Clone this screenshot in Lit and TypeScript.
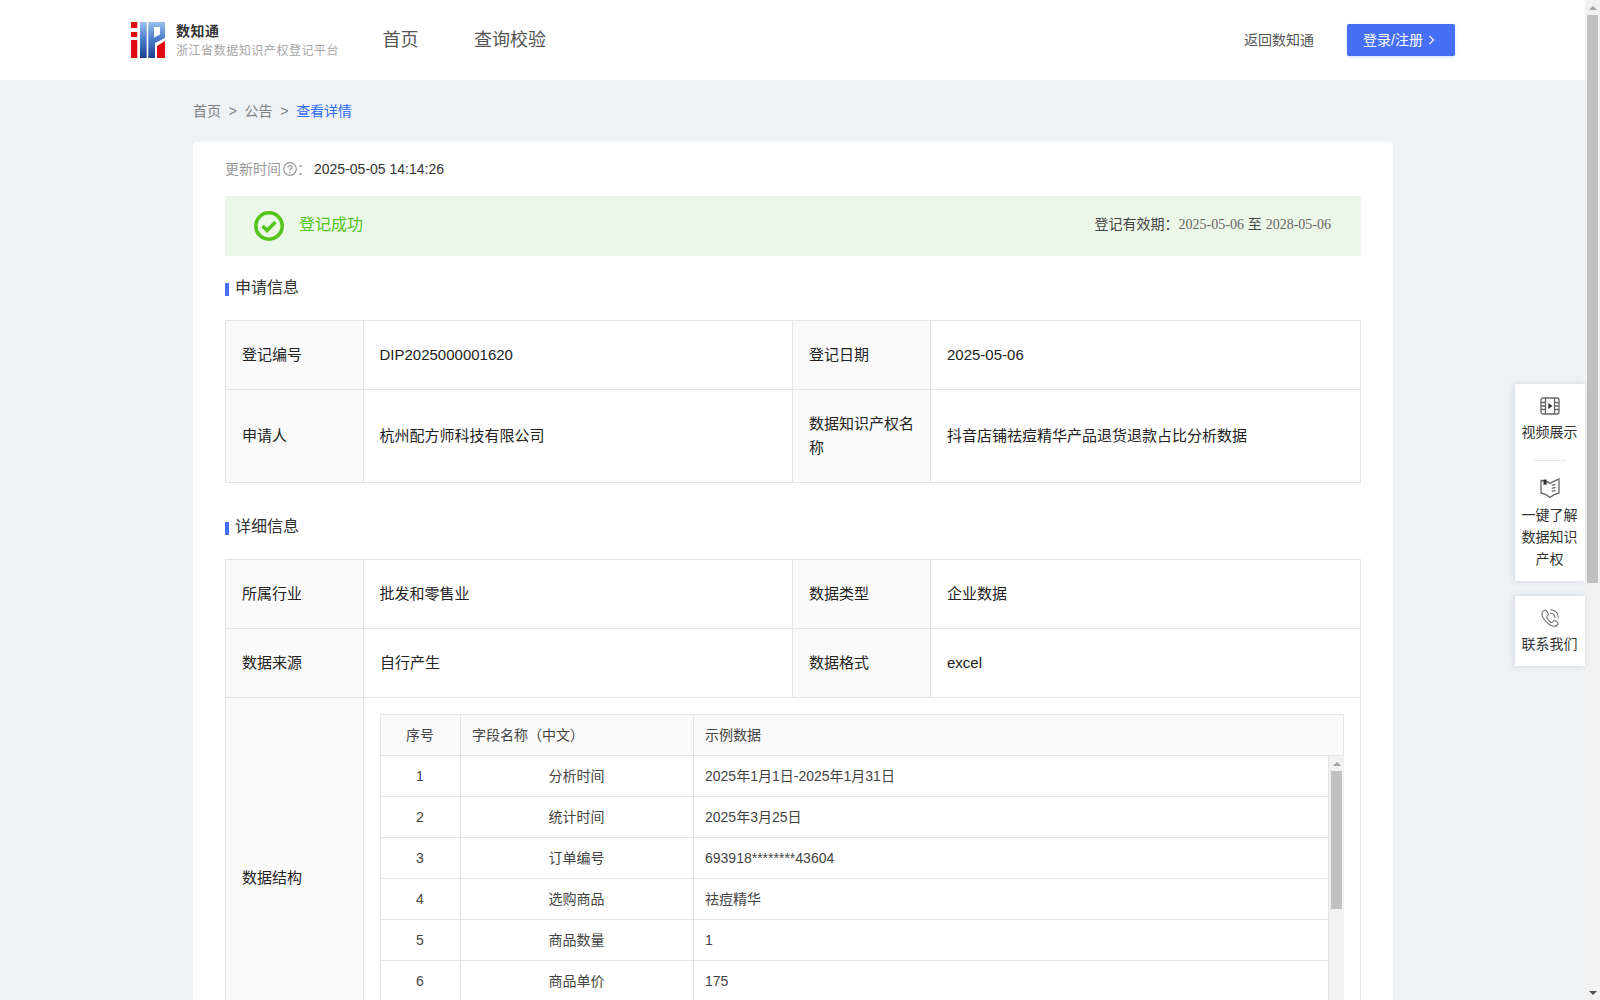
import { LitElement, html, css } from "lit";
import { customElement } from "lit/decorators.js";

const rows = [
  ["1", "分析时间", "2025年1月1日-2025年1月31日"],
  ["2", "统计时间", "2025年3月25日"],
  ["3", "订单编号", "693918********43604"],
  ["4", "选购商品", "祛痘精华"],
  ["5", "商品数量", "1"],
  ["6", "商品单价", "175"],
];

const logo = html`<svg class="logo" viewBox="0 0 34 36" width="34" height="36" aria-hidden="true">
  <defs>
    <linearGradient id="lg" x1="0" y1="0" x2="0" y2="1">
      <stop offset="0" stop-color="#9cc0ee"/>
      <stop offset="0.45" stop-color="#4c80cc"/>
      <stop offset="1" stop-color="#1d3f92"/>
    </linearGradient>
  </defs>
  <rect x="0" y="0" width="6.3" height="6" fill="#e00b12"/>
  <rect x="0" y="10" width="6.3" height="5" fill="#e00b12"/>
  <rect x="0" y="18" width="6.3" height="18" fill="#e00b12"/>
  <rect x="9" y="0" width="6.7" height="36" fill="url(#lg)"/>
  <path d="M17.3 0H34V16L24 21V36H17.3Z" fill="url(#lg)"/>
  <path d="M23 5H29V12.5L23 15.5Z" fill="#fff"/>
  <path d="M26 24L34 19V36H26Z" fill="#e00b12"/>
</svg>`;

const iconVideo = html`<svg viewBox="0 0 20 20" width="20" height="20" fill="none" stroke="#666" stroke-width="1.3" aria-hidden="true">
  <rect x="1" y="2" width="18" height="16" rx="2"/>
  <path d="M5.5 2V18M14.5 2V18M1 6.5H5.5M1 10H5.5M1 13.5H5.5M14.5 6.5H19M14.5 10H19M14.5 13.5H19"/>
  <path d="M8.3 7L12.5 10L8.3 13Z" fill="#333" stroke="none"/>
</svg>`;

const iconBook = html`<svg viewBox="0 0 20 20" width="20" height="20" fill="none" stroke="#666" stroke-width="1.3" aria-hidden="true">
  <path d="M1 2.5C4 2.5 7.5 3.5 10 5.5C12.5 3.5 16 2.5 19 1V15C16 15.5 12.5 17 10 19.5C7.5 17 4 15.5 1 15Z"/>
  <path d="M3.5 1.5H6.5V7.5L5 6.3L3.5 7.5Z" fill="#333" stroke="none"/>
  <path d="M11.8 7.3L15.5 6.3M11.8 10.3L15.5 9.3M11.8 13.3L15.5 12.3"/>
</svg>`;

const iconPhone = html`<svg viewBox="0 0 20 20" width="20" height="20" fill="none" stroke="#777" stroke-width="1.1" stroke-linecap="round" aria-hidden="true">
  <path d="M5 2.2C3.2 2.6 1.6 4.2 2 6.8C2.6 10.6 8 17.4 13.2 18.2C15.5 18.6 17.4 17.4 18 15.8C18.2 15.2 18 14.8 17.5 14.4L15 12.8C14.4 12.4 13.8 12.5 13.4 13L12.5 14.1C12 14.6 11.4 14.6 10.8 14.2C9.2 13 7.6 11.2 6.8 9.6C6.5 9 6.6 8.5 7 8.1L8 7.2C8.5 6.8 8.6 6.2 8.2 5.6L6.5 2.8C6.1 2.3 5.6 2.1 5 2.2Z"/>
  <path d="M10.5 5.2C13 5.4 14.8 7.2 15 9.8M10.5 1.8C15 2.2 18.2 5.4 18.5 10"/>
</svg>`;

@customElement("app-root")
export class AppRoot extends LitElement {
  static styles = css`
    :host {
      display: block;
      position: relative;
      height: 1000px;
      overflow: hidden;
      background: #eef2f5;
      font-family: "Liberation Sans", Arial, "Noto Sans CJK SC", sans-serif;
      font-size: 14px;
      line-height: 22px;
      color: #333;
    }
    * { box-sizing: border-box; }
    .frame { display: flex; height: 1000px; }
    .page { flex: 1; min-width: 0; height: 1000px; overflow: hidden; }

    .head {
      height: 80px;
      background: #fff;
      display: flex;
      align-items: center;
      padding: 0 130px 0 131px;
    }
    .logo { flex: none; }
    .brand { margin: 21px 0 0 11px; width: 206.5px; align-self: flex-start; }
    .brand b { display: block; font-size: 14px; font-weight: 700; line-height: 20px; margin-bottom: 1px; letter-spacing: .5px; color: #333; }
    .brand span { display: block; font-size: 12px; line-height: 18px; letter-spacing: .55px; color: #a6a6a6; }
    .nav { display: flex; gap: 55.5px; font-size: 18px; line-height: 24px; color: #555; margin-top: -1px; }
    .spacer { flex: 1; }
    .back { color: #555; font-size: 14px; margin-right: 33px; margin-top: -1px; }
    .login {
      width: 108px; height: 32px;
      background: #456ff4;
      border-radius: 2px;
      box-shadow: 0 1px 3px rgba(69, 111, 244, .25);
      color: #fff;
      display: flex;
      align-items: center;
      justify-content: center;
      gap: 5px;
      padding: 0 4px 1px 0;
      font-size: 14px;
    }

    .wrap { width: 1200px; margin-left: 193px; }
    .crumb { height: 62px; display: flex; align-items: center; gap: 7.7px; color: #808080; padding-bottom: 1px; }
    .crumb .cur { color: #2f6bf6; }

    .card { background: #fff; border-radius: 4px; padding: 16px 32px 32px; }
    .update { display: flex; align-items: center; height: 22px; color: #999; }
    .update svg { margin-left: 2px; }
    .update .v { color: #333; margin-left: 3px; }

    .banner {
      margin-top: 16px;
      height: 60px;
      background: #ebf7e7;
      display: flex;
      align-items: center;
      padding: 0 30px 0 29px;
    }
    .banner .ok { font-size: 16px; color: #52c41a; margin-left: 15px; padding-bottom: 2px; }
    .banner .valid { margin-left: auto; color: #444; padding-bottom: 4px; }
    .banner .valid i { font-style: normal; font-family: "Liberation Serif", "Times New Roman", serif; color: #666; font-size: 14px; }

    .title {
      display: flex; align-items: center;
      height: 22px;
      font-size: 16px;
      color: #333;
    }
    .title::before { content: ""; width: 4px; height: 13px; background: #456ff4; margin: 2px 6px 0 0; }
    .t1 { margin-top: 21px; }
    .t2 { margin-top: 33px; }

    table.info {
      margin-top: 21px;
      width: 1136px;
      border-collapse: collapse;
      table-layout: fixed;
      font-size: 15px;
      line-height: 24px;
      color: #222;
    }
    .info col.l { width: 138px; }
    .info col.v1 { width: 429px; }
    .info col.l2 { width: 138px; }
    .info td { border: 1px solid #e4e4e4; padding: 22px 16px; vertical-align: middle; }
    .info td.v { padding-left: 15.5px; }
    .info td.l { background: #fafafa; }
    .info td.box { padding: 16px; }

    .sub { width: 964px; border: solid #e4e4e4; border-width: 1px 1px 0 1px; color: #444; font-size: 14px; line-height: 22px; }
    .subhead {
      display: grid;
      grid-template-columns: 80px 233px 1fr;
      height: 41px;
      background: #fafafa;
      border-bottom: 1px solid #e4e4e4;
    }
    .c { display: flex; align-items: center; padding: 0 12px 0 11px; border-right: 1px solid #e4e4e4; }
    .c:last-child { border-right: 0; }
    .c.mid { justify-content: center; }
    .subbody { display: flex; height: 286px; overflow: hidden; margin-right: -1px; }
    .subrows { flex: 1; min-width: 0; border-right: 1px solid #e4e4e4; }
    .subrow {
      display: grid;
      grid-template-columns: 80px 233px 1fr;
      height: 41px;
      border-bottom: 1px solid #e4e4e4;
    }

    .bar { flex: none; width: 15px; background: #f1f1f1; display: flex; flex-direction: column; align-items: center; }
    .bar .thumb { background: #c1c1c1; width: 11px; flex: none; }
    .arrow { width: 15px; height: 15px; display: flex; align-items: center; justify-content: center; flex: none; }
    .arrow::before { content: ""; width: 0; height: 0; border: 4px solid transparent; }
    .arrow.up::before { border-bottom: 4px solid #a3a3a3; border-top: 0; }
    .arrow.down { margin-top: auto; }
    .arrow.down::before { border-top: 4px solid #505050; border-bottom: 0; }

    .pagebar { height: 1000px; }
    .pagebar .thumb { height: 568px; }
    .subbody .bar .thumb { height: 138px; }

    .side {
      position: absolute;
      left: 1515px;
      width: 70px;
      background: #fff;
      box-shadow: -1px 0 6px rgba(60, 70, 90, .16);
      display: flex;
      flex-direction: column;
      align-items: center;
      color: #333;
      font-size: 14px;
      line-height: 22px;
      text-align: center;
    }
    .s1 { top: 384px; height: 197px; padding-top: 12px; }
    .s2 { top: 596px; height: 70px; padding-top: 12px; }
    .side svg { display: block; flex: none; }
    .side .tx { margin: 5px 0 0 -1px; width: 56px; }
    .side .tx.lower { margin-top: 6px; }
    .side hr { border: 0; height: 1px; width: 32px; background: #e4e4e4; margin: 17px 0 17px; flex: none; }
  `;

  render() {
    return html`
      <div class="frame">
        <div class="page">
          <header class="head">
            ${logo}
            <div class="brand"><b>数知通</b><span>浙江省数据知识产权登记平台</span></div>
            <nav class="nav"><span>首页</span><span>查询校验</span></nav>
            <div class="spacer"></div>
            <span class="back">返回数知通</span>
            <div class="login">
              <span>登录/注册</span>
              <svg viewBox="0 0 8 12" width="7" height="10" fill="none" stroke="#fff" stroke-width="1.4" aria-hidden="true"><path d="M1.5 1L6.5 6L1.5 11"/></svg>
            </div>
          </header>
          <div class="wrap">
            <div class="crumb"><span>首页</span><span>&gt;</span><span>公告</span><span>&gt;</span><span class="cur">查看详情</span></div>
            <section class="card">
              <div class="update">
                更新时间
                <svg viewBox="0 0 14 14" width="14" height="14" fill="none" stroke="#999" aria-hidden="true">
                  <circle cx="7" cy="7" r="6.3" stroke-width="1.2"/>
                  <path d="M5 5.6C5 4.4 5.9 3.7 7 3.7C8.1 3.7 9 4.4 9 5.4C9 6.7 7 6.8 7 8.4" stroke-width="1.2"/>
                  <circle cx="7" cy="10.3" r=".85" fill="#999" stroke="none"/>
                </svg>
                ：<span class="v">2025-05-05 14:14:26</span>
              </div>
              <div class="banner">
                <svg viewBox="0 0 30 30" width="30" height="30" fill="none" stroke="#52c41a" aria-hidden="true">
                  <circle cx="15" cy="15" r="13.2" stroke-width="3.6"/>
                  <path d="M8.5 15L13 19.5L21.5 11" stroke-width="3.4"/>
                </svg>
                <span class="ok">登记成功</span>
                <span class="valid">登记有效期：<i>2025-05-06</i> 至 <i>2028-05-06</i></span>
              </div>

              <div class="title t1">申请信息</div>
              <table class="info">
                <colgroup><col class="l"/><col class="v1"/><col class="l2"/><col/></colgroup>
                <tr>
                  <td class="l">登记编号</td><td class="v">DIP2025000001620</td>
                  <td class="l">登记日期</td><td>2025-05-06</td>
                </tr>
                <tr>
                  <td class="l">申请人</td><td class="v">杭州配方师科技有限公司</td>
                  <td class="l">数据知识产权名称</td><td>抖音店铺祛痘精华产品退货退款占比分析数据</td>
                </tr>
              </table>

              <div class="title t2">详细信息</div>
              <table class="info">
                <colgroup><col class="l"/><col class="v1"/><col class="l2"/><col/></colgroup>
                <tr>
                  <td class="l">所属行业</td><td class="v">批发和零售业</td>
                  <td class="l">数据类型</td><td>企业数据</td>
                </tr>
                <tr>
                  <td class="l">数据来源</td><td>自行产生</td>
                  <td class="l">数据格式</td><td>excel</td>
                </tr>
                <tr>
                  <td class="l">数据结构</td>
                  <td class="box" colspan="3">
                    <div class="sub">
                      <div class="subhead">
                        <div class="c mid">序号</div>
                        <div class="c">字段名称（中文）</div>
                        <div class="c">示例数据</div>
                      </div>
                      <div class="subbody">
                        <div class="subrows">
                          ${rows.map(
                            (r) => html`<div class="subrow">
                              <div class="c mid">${r[0]}</div>
                              <div class="c mid">${r[1]}</div>
                              <div class="c">${r[2]}</div>
                            </div>`
                          )}
                        </div>
                        <div class="bar"><div class="arrow up"></div><div class="thumb"></div></div>
                      </div>
                    </div>
                  </td>
                </tr>
              </table>
            </section>
          </div>
        </div>
        <div class="bar pagebar">
          <div class="arrow up"></div>
          <div class="thumb"></div>
          <div class="arrow down"></div>
        </div>
      </div>
      <aside class="side s1">
        ${iconVideo}
        <div class="tx">视频展示</div>
        <hr />
        ${iconBook}
        <div class="tx lower">一键了解数据知识产权</div>
      </aside>
      <aside class="side s2">
        ${iconPhone}
        <div class="tx">联系我们</div>
      </aside>
    `;
  }
}
